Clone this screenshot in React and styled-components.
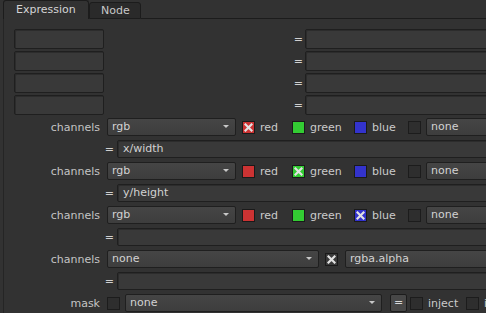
import React from "react"
import styled, { createGlobalStyle } from "styled-components"

const Global = createGlobalStyle`
  html, body {
    margin: 0;
    padding: 0;
    background: #323232;
  }
  body {
    font-family: "DejaVu Sans", Verdana, sans-serif;
    font-size: 11px;
    color: #cfcfcf;
  }
`

const Window = styled.div`
  width: 486px;
  height: 313px;
  overflow: hidden;
  background: #323232;
`

const TabBar = styled.div`
  display: flex;
  align-items: flex-end;
  height: 19px;
  padding-left: 3px;
  box-sizing: border-box;
`

const Tab = styled.div`
  box-sizing: border-box;
  height: ${p => (p.$active ? "19px" : "17px")};
  width: ${p => p.$w}px;
  padding-left: ${p => p.$pad}px;
  line-height: ${p => (p.$active ? "17px" : "15px")};
  background: ${p => (p.$active ? "#323232" : "#2a2a2a")};
  border: 1px solid #1c1c1c;
  border-bottom: ${p => (p.$active ? "none" : "1px solid #1c1c1c")};
  border-radius: 3px 3px 0 0;
  color: ${p => (p.$active ? "#d4d4d4" : "#c8c8c8")};
  white-space: nowrap;
`

const TabFill = styled.div`
  flex: 1;
  border-bottom: 1px solid #1c1c1c;
`

const Panel = styled.div`
  margin-left: 3px;
  width: 620px;
  height: 294px;
  border-left: 1px solid #252525;
  padding-top: 9px;
  box-sizing: border-box;
`

const Row = styled.div`
  display: flex;
  align-items: center;
  height: 22px;
`

const Label = styled.div`
  width: 96px;
  margin-right: 7px;
  text-align: right;
  color: #c4c4c4;
  white-space: nowrap;
`

const Eq = styled.div`
  width: ${p => p.$w}px;
  margin-right: ${p => p.$gap}px;
  text-align: right;
  color: #d0d0d0;
  flex: none;
`

const Field = styled.div`
  box-sizing: border-box;
  height: ${p => p.$h || 18}px;
  width: ${p => (p.$w ? `${p.$w}px` : "auto")};
  flex: ${p => (p.$w ? "none" : "1")};
  margin-left: ${p => p.$ml || 0}px;
  background: #393939;
  border: 1px solid #1f1f1f;
  border-radius: 2px;
  box-shadow: inset 1px 1px 0 #2c2c2c;
  padding-left: 5px;
  line-height: 16px;
  color: #d2d2d2;
  white-space: nowrap;
`

const Dropdown = styled.div`
  position: relative;
  box-sizing: border-box;
  height: 18px;
  width: ${p => (p.$w ? `${p.$w}px` : "auto")};
  flex: ${p => (p.$w ? "none" : "1")};
  margin-left: ${p => p.$ml || 0}px;
  background: linear-gradient(#454545, #3d3d3d);
  border: 1px solid #1f1f1f;
  border-radius: 2px;
  padding-left: 4px;
  line-height: 16px;
  color: #d2d2d2;
  white-space: nowrap;
`

const Arrow = styled.span`
  position: absolute;
  right: 6px;
  top: 6px;
  width: 0;
  height: 0;
  border-left: 3px solid transparent;
  border-right: 3px solid transparent;
  border-top: 3px solid #c8c8c8;
`

const Toggle = styled.div`
  display: flex;
  align-items: center;
  flex: none;
  width: ${p => p.$w}px;
  margin-left: ${p => p.$ml || 0}px;
`

const Box = styled.div`
  box-sizing: border-box;
  width: 13px;
  height: 13px;
  flex: none;
  background: ${p => p.$c || "#2e2e2e"};
  border: 1px solid ${p => (p.$c ? "#1a1a1a" : "#1c1c1c")};
  display: flex;
  align-items: center;
  justify-content: center;
  margin-right: 5px;
`

const ToggleText = styled.span`
  color: #cacaca;
  white-space: nowrap;
`

const SmallButton = styled.div`
  box-sizing: border-box;
  width: 17px;
  height: 18px;
  margin-left: 8px;
  margin-right: 3px;
  background: #474747;
  border: 1px solid #1c1c1c;
  border-radius: 2px;
  text-align: center;
  line-height: 16px;
  color: #dadada;
  flex: none;
`

const Cross = () => (
  <svg width="9" height="9" viewBox="0 0 9 9">
    <path d="M1.5 1.5 L7.5 7.5 M7.5 1.5 L1.5 7.5" stroke="#e2e2e2" strokeWidth="2.2" strokeLinecap="square" />
  </svg>
)

const colors = { red: "#cc3333", green: "#33cc33", blue: "#3333cc" }

const ChannelRow = ({ value, checked }) => (
  <Row>
    <Label>channels</Label>
    <Dropdown $w={129}>
      {value}
      <Arrow />
    </Dropdown>
    <Toggle $w={50} $ml={6}>
      <Box $c={colors.red}>{checked === "red" && <Cross />}</Box>
      <ToggleText>red</ToggleText>
    </Toggle>
    <Toggle $w={62}>
      <Box $c={colors.green}>{checked === "green" && <Cross />}</Box>
      <ToggleText>green</ToggleText>
    </Toggle>
    <Toggle $w={54}>
      <Box $c={colors.blue}>{checked === "blue" && <Cross />}</Box>
      <ToggleText>blue</ToggleText>
    </Toggle>
    <Toggle $w={18}>
      <Box />
    </Toggle>
    <Dropdown $w={120}>none</Dropdown>
  </Row>
)

const ExprRow = ({ value }) => (
  <Row>
    <Eq $w={110} $gap={0}>=</Eq>
    <Field $ml={3}>{value}</Field>
  </Row>
)

export default function App() {
  return (
    <Window>
      <Global />
      <TabBar>
        <Tab $active $w={86} $pad={12}>Expression</Tab>
        <Tab $w={52} $pad={11}>Node</Tab>
        <TabFill />
      </TabBar>
      <Panel>
        {[0, 1, 2, 3].map(i => (
          <Row key={i}>
            <Field $w={90} $h={20} $ml={10} />
            <Eq $w={199} $gap={2}>=</Eq>
            <Field $h={20} />
          </Row>
        ))}
        <ChannelRow value="rgb" checked="red" />
        <ExprRow value="x/width" />
        <ChannelRow value="rgb" checked="green" />
        <ExprRow value="y/height" />
        <ChannelRow value="rgb" checked="blue" />
        <ExprRow value="" />
        <Row>
          <Label>channels</Label>
          <Dropdown $w={212}>
            none
            <Arrow />
          </Dropdown>
          <Toggle $w={20} $ml={6}>
            <Box $c="#3a3a3a"><Cross /></Box>
          </Toggle>
          <Dropdown>rgba.alpha</Dropdown>
        </Row>
        <ExprRow value="" />
        <Row>
          <Label>mask</Label>
          <Box />
          <Dropdown $w={257}>
            none
            <Arrow />
          </Dropdown>
          <SmallButton>=</SmallButton>
          <Toggle $w={56}>
            <Box />
            <ToggleText>inject</ToggleText>
          </Toggle>
          <Toggle $w={40}>
            <Box />
            <ToggleText>invert</ToggleText>
          </Toggle>
        </Row>
      </Panel>
    </Window>
  )
}
